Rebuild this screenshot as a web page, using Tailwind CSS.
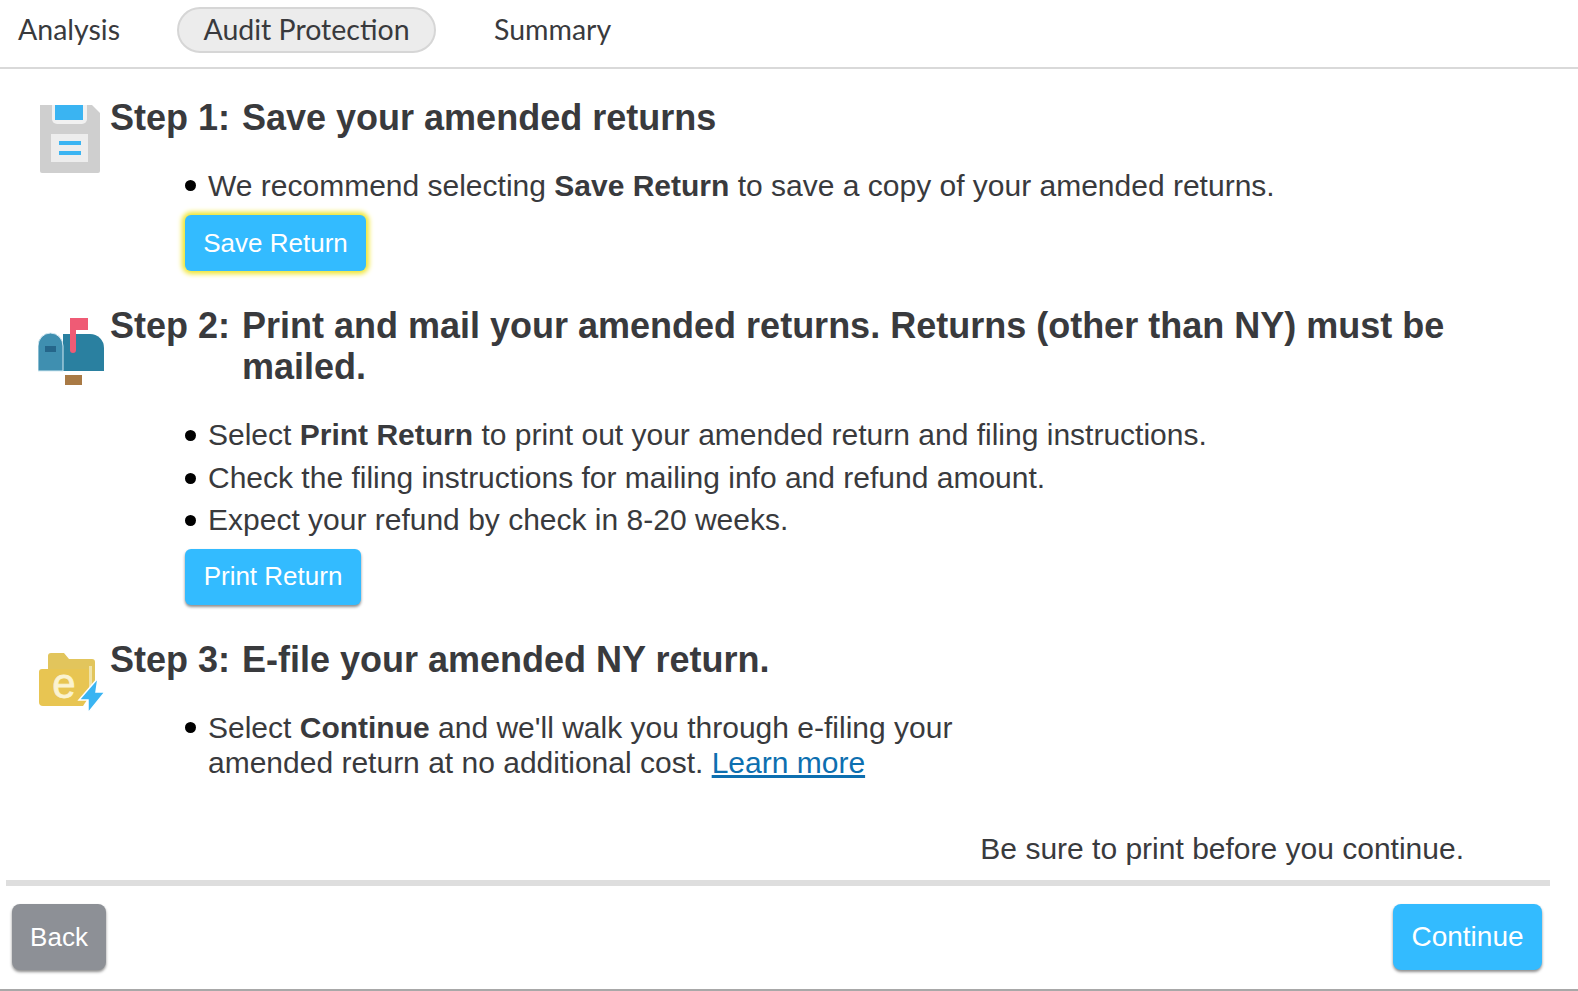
<!DOCTYPE html>
<html lang="en">
<head>
  <meta charset="UTF-8">
  <title>Amended Return Filing</title>
  <script src="https://cdn.jsdelivr.net/npm/@tailwindcss/browser@4"></script>
</head>
<body class="bg-white font-['Liberation_Sans',Arial,sans-serif] text-[#393a3d] overflow-hidden">
  <div class="h-[991px] w-[1578px] flex flex-col border-b-2 border-[#a8a8a8]">

    <!-- Tabs -->
    <nav class="h-[69px] shrink-0 flex items-center pb-[8px] border-b-2 border-[#d9d9d9] font-['Lato',sans-serif] text-[28.500px]">
      <span class="ml-[18px] w-[159px]">Analysis</span>
      <span class="h-[46px] w-[259px] flex items-center justify-center rounded-full bg-[#ececec] border-2 border-[#d6d6d6]">Audit Protection</span>
      <span class="ml-[58px]">Summary</span>
    </nav>

    <!-- Steps -->
    <main class="pl-[38px] pt-[28px] grow">
      <section class="flex">
        <svg class="w-[72px] h-[72px] shrink-0 mt-[8px]" viewBox="0 0 72 72">
          <path d="M2 0h52l8 8v58a2 2 0 0 1-2 2H4a2 2 0 0 1-2-2z" fill="#cfcfcf"/>
          <path d="M14 0h35v14a5 5 0 0 1-5 5H19a5 5 0 0 1-5-5z" fill="#f1f1f1"/>
          <rect x="17" y="0" width="28" height="15" fill="#3ab4f2"/>
          <rect x="13" y="29" width="37" height="28" fill="#ededed"/>
          <rect x="21" y="36" width="22" height="4" fill="#3ab4f2"/>
          <rect x="21" y="46" width="22" height="4" fill="#3ab4f2"/>
        </svg>
        <div class="grow">
          <h2 class="flex text-[36px] leading-[41px] font-bold">
            <span class="w-[132px] shrink-0">Step 1:</span><span>Save your amended returns</span>
          </h2>
          <ul class="ml-[75px] mt-[26px] text-[30px] leading-[43px]">
            <li class="flex items-start"><span class="mt-[16px] mr-[12px] w-[11px] h-[11px] rounded-full bg-black shrink-0"></span><span>We recommend selecting <b>Save Return</b> to save a copy of your amended returns.</span></li>
          </ul>
          <button class="block ml-[75px] mt-[8px] w-[181px] h-[56px] rounded-[6px] bg-[#33bbff] text-white text-[26px] shadow-[0_0_5px_3px_#efe52f]">Save Return</button>
        </div>
      </section>

      <section class="flex mt-[34px]">
        <svg class="w-[72px] h-[72px] shrink-0 mt-[10px]" viewBox="0 0 72 72">
          <path d="M25 19h27a14 14 0 0 1 14 14v23H25z" fill="#2a80a0"/>
          <path d="M32 3h18v12H38v20a3 3 0 0 1-6 0z" fill="#ef5b75"/>
          <path d="M0 31a12.500 13 0 0 1 25 0v25H0z" fill="#3f8fb0" stroke="#d4e9f2" stroke-width="1"/>
          <rect x="7" y="31" width="11" height="6" fill="#25668a"/>
          <rect x="27" y="60" width="17" height="10" fill="#a97a45"/>
        </svg>
        <div class="grow">
          <h2 class="flex text-[36px] leading-[41px] font-bold">
            <span class="w-[132px] shrink-0">Step 2:</span><span class="w-[1240px]">Print and mail your amended returns. Returns (other than NY) must be mailed.</span>
          </h2>
          <ul class="ml-[75px] mt-[27px] text-[30px] leading-[42.500px]">
            <li class="flex items-start"><span class="mt-[16px] mr-[12px] w-[11px] h-[11px] rounded-full bg-black shrink-0"></span><span>Select <b>Print Return</b> to print out your amended return and filing instructions.</span></li>
            <li class="flex items-start"><span class="mt-[16px] mr-[12px] w-[11px] h-[11px] rounded-full bg-black shrink-0"></span><span>Check the filing instructions for mailing info and refund amount.</span></li>
            <li class="flex items-start"><span class="mt-[16px] mr-[12px] w-[11px] h-[11px] rounded-full bg-black shrink-0"></span><span>Expect your refund by check in 8-20 weeks.</span></li>
          </ul>
          <button class="block ml-[75px] mt-[7px] w-[176px] h-[56px] rounded-[6px] bg-[#33bbff] text-white text-[26px] shadow-[0_2px_3px_rgba(0,0,0,0.45)]">Print Return</button>
        </div>
      </section>

      <section class="flex mt-[34px]">
        <svg class="w-[72px] h-[72px] shrink-0 mt-[11px]" viewBox="0 0 72 72">
          <path d="M10 6a3 3 0 0 1 3-3h13l5 6h23a3 3 0 0 1 3 3v36H10z" fill="#e2c55c"/>
          <path d="M51 16h3v32h-3z" fill="#f0e3a8"/>
          <path d="M1 22a3 3 0 0 1 3-3h44a3 3 0 0 1 3 3v25l-6 9H5a4 4 0 0 1-4-4z" fill="#e8c552"/>
          <text x="26" y="48" text-anchor="middle" font-size="42" font-family="Liberation Sans, sans-serif" fill="#fbf3d0" stroke="#fbf3d0" stroke-width="0.800">e</text>
          <path d="M60 28 41 50h9v13l17-21h-9z" fill="#3ab4f2" stroke="#fff" stroke-width="1.500"/>
        </svg>
        <div class="grow">
          <h2 class="flex text-[36px] leading-[41px] font-bold">
            <span class="w-[132px] shrink-0">Step 3:</span><span>E-file your amended NY return.</span>
          </h2>
          <ul class="ml-[75px] mt-[30px] text-[30px] leading-[35px]">
            <li class="flex items-start"><span class="mt-[12px] mr-[12px] w-[11px] h-[11px] rounded-full bg-black shrink-0"></span><span class="w-[800px]">Select <b>Continue</b> and we'll walk you through e-filing your amended return at no additional cost. <a href="#" class="text-[#0d6fb0] underline">Learn more</a></span></li>
          </ul>
        </div>
      </section>
    </main>

    <!-- Footer -->
    <p class="text-right pr-[114px] text-[30px] leading-[35px]">Be sure to print before you continue.</p>
    <footer class="mt-[14px] ml-[6px] mr-[28px] border-t-[6px] border-[#dedede] flex justify-between pt-[18px] pb-[19px] pl-[6px] pr-[8px]">
      <button class="w-[94px] h-[66px] rounded-[8px] bg-[#8d9096] text-white text-[26px] shadow-[0_2px_3px_rgba(0,0,0,0.45)]">Back</button>
      <button class="w-[149px] h-[66px] rounded-[8px] bg-[#33bbff] text-white text-[28px] shadow-[0_2px_3px_rgba(0,0,0,0.45)]">Continue</button>
    </footer>
  </div>
</body>
</html>
